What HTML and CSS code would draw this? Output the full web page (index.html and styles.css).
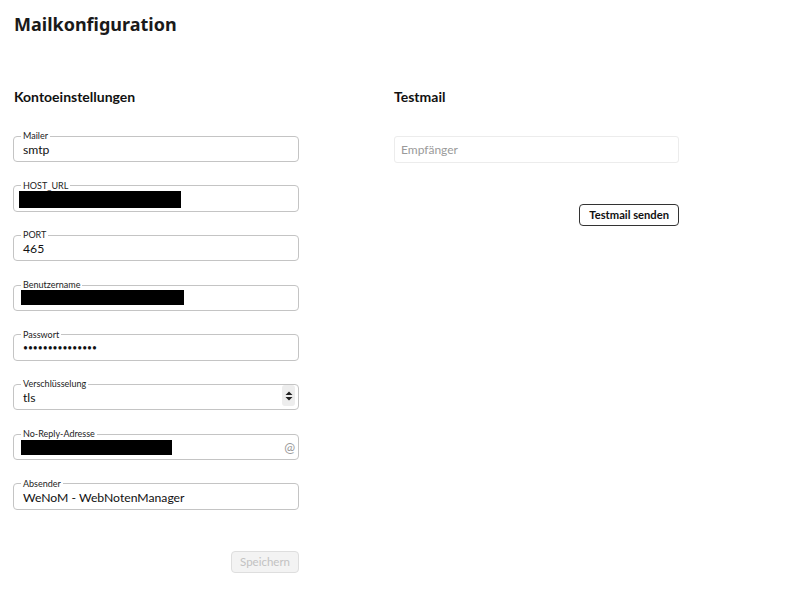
FILE: index.html
```html
<!DOCTYPE html>
<html lang="de">
<head>
<meta charset="utf-8">
<title>Mailkonfiguration</title>
<link rel="stylesheet" href="styles.css">
</head>
<body>
<main class="page">
  <h1 class="title">Mailkonfiguration</h1>
  <div class="columns">
    <section class="col">
      <h2 class="heading">Kontoeinstellungen</h2>
      <form class="form">
        <fieldset class="field"><legend>Mailer</legend><div class="value">smtp</div></fieldset>
        <fieldset class="field"><legend>HOST_URL</legend><div class="value"><span class="redact redact-host"></span></div></fieldset>
        <fieldset class="field"><legend>PORT</legend><div class="value">465</div></fieldset>
        <fieldset class="field"><legend>Benutzername</legend><div class="value"><span class="redact redact-user"></span></div></fieldset>
        <fieldset class="field"><legend>Passwort</legend><div class="value pw">•••••••••••••••</div></fieldset>
        <fieldset class="field"><legend>Verschlüsselung</legend><div class="value row">tls<span class="spinner"><svg width="8" height="12" viewBox="0 0 8 12"><path d="M4 1.5 L7.5 5 L0.5 5 Z M4 10.5 L7.5 7 L0.5 7 Z" fill="#222"/></svg></span></div></fieldset>
        <fieldset class="field"><legend>No-Reply-Adresse</legend><div class="value row"><span class="redact redact-mail"></span><span class="at">@</span></div></fieldset>
        <fieldset class="field"><legend>Absender</legend><div class="value">WeNoM - WebNotenManager</div></fieldset>
        <div class="actions"><button type="button" class="btn btn-disabled" disabled>Speichern</button></div>
      </form>
    </section>
    <section class="col">
      <h2 class="heading">Testmail</h2>
      <div class="plain-input">Empfänger</div>
      <div class="actions actions-test"><button type="button" class="btn btn-outline">Testmail senden</button></div>
    </section>
  </div>
</main>
</body>
</html>
```
FILE: styles.css
```css
* { box-sizing: border-box; }
html, body { margin: 0; background: #fff; }
body {
  font-family: Lato, "Noto Sans", sans-serif;
  color: #111;
}
.page { padding: 12px 0 0 14px; }
.title {
  margin: 0;
  font-family: "Noto Sans", "Open Sans", sans-serif;
  font-size: 18px;
  font-weight: 700;
  line-height: 24px;
  color: #1a1a1a;
}
.columns {
  display: grid;
  grid-template-columns: 285px 285px;
  column-gap: 95px;
  margin-top: 53px;
}
.heading {
  margin: 0;
  font-size: 14px;
  font-weight: 700;
  line-height: 16px;
}
.form {
  display: flex;
  flex-direction: column;
  gap: 18.7px;
  margin-top: 26px;
  margin-left: -1px;
}
.field {
  margin: 0;
  border: 1px solid #c4c4c4;
  border-radius: 4px;
  padding: 0 9px 3px 9px;
  min-width: 0;
}
.field legend {
  font-size: 9px;
  line-height: 10px;
  padding: 0 2px;
  margin-left: -2px;
  color: #222;
}
.value {
  font-size: 12.2px;
  line-height: 17px;
  height: 17px;
  color: #111;
}
.value.pw { font-size: 8.5px; letter-spacing: 0; }
.value.row { display: flex; align-items: center; justify-content: space-between; }
.redact { display: block; background: #000; height: 17px; }
.redact-host { width: 162px; margin-left: -4px; }
.redact-user { width: 163px; margin-left: -2px; height: 15px; }
.redact-mail { width: 151px; margin-left: -2px; height: 15px; }
.spinner {
  display: flex;
  align-items: center;
  justify-content: center;
  width: 13px;
  height: 21px;
  background: #ededed;
  border-radius: 3px;
  margin-right: -6px;
  margin-top: -4px;
}
.at {
  color: #9a9a9a;
  font-size: 13px;
  margin-right: -6px;
}
.actions { display: flex; justify-content: flex-end; margin-top: 22px; }
.btn {
  font-family: inherit;
  font-size: 11.5px;
  line-height: 14px;
  border-radius: 4px;
  padding: 3px 8px;
  background: #fff;
}
.btn-disabled {
  background: #f3f3f3;
  border: 1px solid #dedede;
  color: #c2c2c2;
  padding: 3px 8px;
}
.btn-outline {
  font-size: 11.2px;
  border: 1px solid #333;
  color: #111;
  font-weight: 700;
  padding: 3px 9px;
}
.plain-input {
  margin-top: 31px;
  height: 27px;
  border: 1px solid #ececec;
  border-radius: 3px;
  font-size: 12px;
  line-height: 25px;
  padding-left: 6px;
  color: #9a9a9a;
}
.actions-test { margin-top: 41px; }
```
